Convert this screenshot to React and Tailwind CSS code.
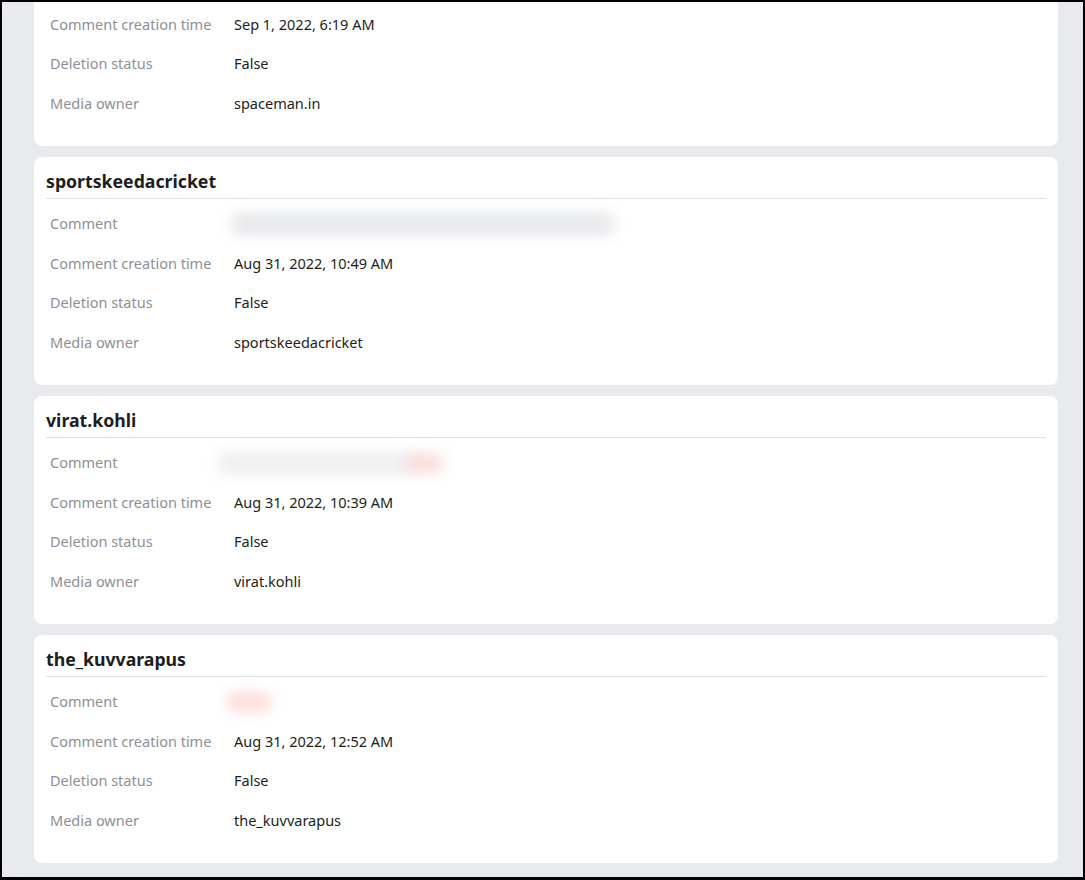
const cards = [
  {
    name: 'sportskeedacricket',
    time: 'Aug 31, 2022, 10:49 AM',
    owner: 'sportskeedacricket',
    blur: 'gray',
  },
  {
    name: 'virat.kohli',
    time: 'Aug 31, 2022, 10:39 AM',
    owner: 'virat.kohli',
    blur: 'mixed',
  },
  {
    name: 'the_kuvvarapus',
    time: 'Aug 31, 2022, 12:52 AM',
    owner: 'the_kuvvarapus',
    blur: 'pink',
  },
];

// redacted comment text, drawn as soft smudges
function BlurredComment({ kind }) {
  if (kind === 'gray') {
    return (
      <div className="-ml-[4px] flex items-center">
        <span className="h-[22px] w-[385px] rounded-full bg-[#e6e7ea] blur-[7px]" />
      </div>
    );
  }
  if (kind === 'mixed') {
    return (
      <div className="-ml-[18px] flex items-center">
        <span className="h-[22px] w-[200px] rounded-full bg-[#eeeff1] blur-[7px]" />
        <span className="-ml-[12px] h-[20px] w-[40px] rounded-full bg-[#f9dcdc] blur-[7px]" />
      </div>
    );
  }
  if (kind === 'pink') {
    return (
      <div className="-ml-[8px] flex items-center">
        <span className="h-[22px] w-[46px] rounded-full bg-[#fce1df] blur-[6px]" />
      </div>
    );
  }
  return null;
}

function Row({ label, children }) {
  return (
    <div className="flex h-[39.5px] items-center pl-1 text-[14.5px]">
      <div className="w-[184px] shrink-0 text-[#8d9096]">{label}</div>
      <div className="text-[#1c1e21]">{children}</div>
    </div>
  );
}

function Card({ card }) {
  return (
    <div className="rounded-lg bg-white px-3 pb-[22px] pt-3">
      <div className="border-b border-[#dfe1e5] pb-[5px] text-[17.7px] font-bold leading-6 text-[#1c1e21]">
        {card.name}
      </div>
      <div className="pt-[6px]">
        <Row label="Comment">
          <BlurredComment kind={card.blur} />
        </Row>
        <Row label="Comment creation time">{card.time}</Row>
        <Row label="Deletion status">False</Row>
        <Row label="Media owner">{card.owner}</Row>
      </div>
    </div>
  );
}

export default function App() {
  return (
    <div
      className="h-[880px] w-[1085px] overflow-hidden border-2 border-b-[3px] border-black bg-[#e9eaed]"
      style={{ fontFamily: '"Noto Sans", "Open Sans", Arial, sans-serif' }}
    >
      <div className="flex flex-col gap-[11px] pl-[32px] pr-[25px]">
        {/* previous card, scrolled partly out of view */}
        <div className="rounded-b-lg bg-white px-3 pb-[22px] pt-[3px]">
          <Row label="Comment creation time">Sep 1, 2022, 6:19 AM</Row>
          <Row label="Deletion status">False</Row>
          <Row label="Media owner">spaceman.in</Row>
        </div>
        {cards.map((card) => (
          <Card key={card.name} card={card} />
        ))}
      </div>
    </div>
  );
}
